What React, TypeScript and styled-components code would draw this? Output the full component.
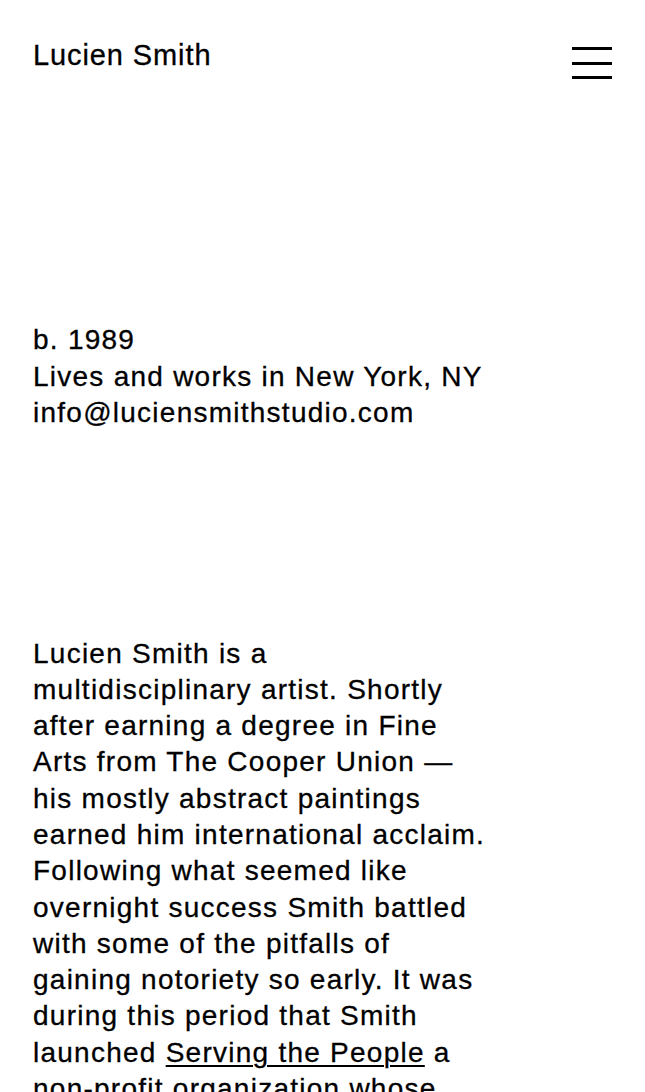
import React from "react";
import styled, { createGlobalStyle } from "styled-components";

const GlobalStyle = createGlobalStyle`
  html, body {
    margin: 0;
    padding: 0;
    background: #ffffff;
  }
  body {
    font-family: "Liberation Sans", Arial, Helvetica, sans-serif;
    color: #000000;
    -webkit-font-smoothing: antialiased;
  }
`;

export default function App() {
  return (
    <>
      <GlobalStyle />
      <Page>
        <Header>
          <Name>Lucien Smith</Name>
          <MenuButton aria-label="Menu">
            <MenuBar />
            <MenuBar />
            <MenuBar />
          </MenuButton>
        </Header>

        <Info>
          <Line>b. 1989</Line>
          <Line>Lives and works in New York, NY</Line>
          <Line>info@luciensmithstudio.com</Line>
        </Info>

        <Bio>
          Lucien Smith is a multidisciplinary artist. Shortly after earning a
          degree in Fine Arts from The Cooper Union — his mostly abstract
          paintings earned him international acclaim. Following what seemed
          like overnight success Smith battled with some of the pitfalls of
          gaining notoriety so early. It was during this period that Smith
          launched <BioLink href="#">Serving the People</BioLink> a non-profit
          organization whose mission is to foster creative communities and
          connect people through art.
        </Bio>
      </Page>
    </>
  );
}

const Page = styled.div`
  display: flex;
  flex-direction: column;
  padding: 0 33px;
  height: 1092px;
  overflow: hidden;
  box-sizing: border-box;
  -webkit-text-stroke: 0.3px #000000;
`;

const Header = styled.header`
  display: flex;
  justify-content: space-between;
  align-items: flex-start;
  padding-top: 37px;
`;

const Name = styled.div`
  font-size: 29px;
  line-height: 36px;
  letter-spacing: 0.9px;
`;

const MenuButton = styled.button`
  display: flex;
  flex-direction: column;
  gap: 11.5px;
  width: 40px;
  margin-top: 10px;
  padding: 0;
  border: 0;
  background: none;
`;

const MenuBar = styled.span`
  display: block;
  height: 3px;
  background: #000000;
`;

const Info = styled.div`
  display: flex;
  flex-direction: column;
  margin-top: 243px;
  font-size: 28px;
  line-height: 36.5px;
  letter-spacing: 1.25px;
`;

const Line = styled.div``;

const Bio = styled.p`
  margin: 204px 0 0;
  max-width: 462px;
  font-size: 28px;
  line-height: 36.3px;
  letter-spacing: 1.25px;
`;

const BioLink = styled.a`
  color: inherit;
  text-decoration: underline;
  text-underline-offset: 3px;
  text-decoration-thickness: 2px;
`;
